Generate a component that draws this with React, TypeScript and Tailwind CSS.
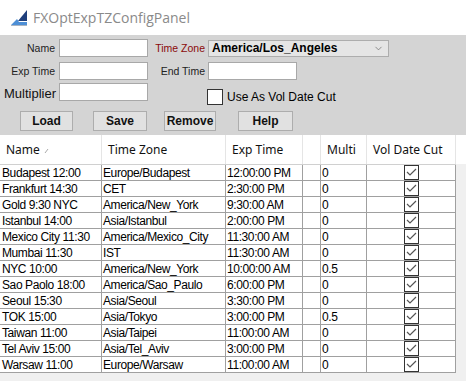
import { ChevronDown } from 'lucide-react';

const rows = [
  ['Budapest 12:00', 'Europe/Budapest', '12:00:00 PM', '0'],
  ['Frankfurt 14:30', 'CET', '2:30:00 PM', '0'],
  ['Gold 9:30 NYC', 'America/New_York', '9:30:00 AM', '0'],
  ['Istanbul 14:00', 'Asia/Istanbul', '2:00:00 PM', '0'],
  ['Mexico City 11:30', 'America/Mexico_City', '11:30:00 AM', '0'],
  ['Mumbai 11:30', 'IST', '11:30:00 AM', '0'],
  ['NYC 10:00', 'America/New_York', '10:00:00 AM', '0.5'],
  ['Sao Paolo 18:00', 'America/Sao_Paulo', '6:00:00 PM', '0'],
  ['Seoul 15:30', 'Asia/Seoul', '3:30:00 PM', '0'],
  ['TOK 15:00', 'Asia/Tokyo', '3:00:00 PM', '0.5'],
  ['Taiwan 11:00', 'Asia/Taipei', '11:00:00 AM', '0'],
  ['Tel Aviv 15:00', 'Asia/Tel_Aviv', '3:00:00 PM', '0'],
  ['Warsaw 11:00', 'Europe/Warsaw', '11:00:00 AM', '0'],
];

const AppIcon = () => (
  <svg width="18" height="16" viewBox="0 0 18 16">
    <polygon points="17,0 17,11 8,11" fill="#1f3f7c" />
    <polygon points="1,15 7,9 9,12 17,12 17,15" fill="#4d8fd6" />
    <polygon points="1,15 17,15 17,16 1,16" fill="#a9b4c2" />
  </svg>
);

const CellCheck = () => (
  <div className="w-[15px] h-[15px] border border-[#333] bg-white flex items-center justify-center">
    <svg width="11" height="9" viewBox="0 0 11 9">
      <polyline points="1,4 4,7 10,1" fill="none" stroke="#555" strokeWidth="1.2" />
    </svg>
  </div>
);

const label = "text-[10.5px] text-right pr-[2px] leading-none";
const input = "h-[18px] bg-white border border-[#a8a8a8]";
const btn = "h-[20px] bg-[#e1e1e1] border border-[#adadad] text-[12px] font-bold text-[#111] flex items-center justify-center";
const th = "h-[29px] border-r border-[#e5e5e5] pl-[6px] flex items-center text-[12px] text-[#111]";
const td = "h-[16px] border-r border-b border-[#a0a0a0] flex items-center text-[12px] tracking-[-0.4px] text-black whitespace-nowrap overflow-hidden";

export default function App() {
  return (
    <div className="w-[466px] h-[381px] bg-[#f0f0f0] overflow-hidden flex flex-col" style={{ fontFamily: '"Liberation Sans", Arial, sans-serif' }}>
      <div className="h-[35px] shrink-0 bg-white flex items-center pl-[10px] gap-[5px]">
        <AppIcon />
        <span className="text-[14px] text-[#8a8a8a]" style={{ fontFamily: '"Open Sans", sans-serif' }}>FXOptExpTZConfigPanel</span>
      </div>

      <div className="h-[100px] shrink-0 bg-[#d4d4d4] pt-[4px]">
        <div className="grid grid-cols-[57px_91px_59px_auto] items-center">
          <div className={label + ' text-[#222]'}>Name</div>
          <div className={input + ' ml-[2px] w-[89px]'} />
          <div className={label + ' text-[#8b0a0a]'}>Time Zone</div>
          <div className="ml-[1px] w-[181px] h-[17px] bg-[#e5e5e5] border border-[#adadad] flex items-center justify-between pl-[3px] pr-[4px]">
            <span className="text-[12px] font-bold text-black">America/Los_Angeles</span>
            <ChevronDown size={11} strokeWidth={1.5} color="#666" />
          </div>
        </div>
        <div className="grid grid-cols-[57px_91px_59px_auto] items-center mt-[5px]">
          <div className={label + ' text-[#222]'}>Exp Time</div>
          <div className={input + ' ml-[2px] w-[89px]'} />
          <div className={label + ' text-[#222]'}>End Time</div>
          <div className={input + ' ml-[1px] w-[89px]'} />
        </div>
        <div className="grid grid-cols-[57px_91px_59px_auto] items-start mt-[3px]">
          <div className="text-[13px] text-[#111] text-right pr-[1px] pt-[1px]">Multiplier</div>
          <div className={input + ' ml-[2px] w-[89px]'} />
          <div />
          <div className="flex items-center gap-[4px] mt-[5px]">
            <div className="w-[16px] h-[16px] bg-white border border-[#333]" />
            <span className="text-[12px] text-black">Use As Vol Date Cut</span>
          </div>
        </div>
        <div className="flex mt-[5px] pl-[20px]">
          <div className={btn + ' w-[53px]'}>Load</div>
          <div className={btn + ' w-[54px] ml-[20px]'}>Save</div>
          <div className={btn + ' w-[52px] ml-[17px]'}>Remove</div>
          <div className={btn + ' w-[55px] ml-[22px]'}>Help</div>
        </div>
      </div>

      <div className="bg-white flex" style={{ fontFamily: '"Noto Sans", sans-serif' }}>
        <div className="grid grid-cols-[102px_124px_77px_18px_46px_89px] w-[456px]">
          <div className={th}>
            Name
            <svg width="6" height="6" viewBox="0 0 6 6" className="ml-[4px] mt-[2px]">
              <line x1="1" y1="5" x2="4" y2="1" stroke="#aaa" strokeWidth="1" />
            </svg>
          </div>
          <div className={th}>Time Zone</div>
          <div className={th}>Exp Time</div>
          <div className={th} />
          <div className={th}>Multi</div>
          <div className={th + ' pl-[5px]'}>Vol Date Cut</div>
        </div>
      </div>

      <div className="grid grid-cols-[102px_124px_77px_18px_46px_89px] w-[456px] border-t border-[#d0d0d0] bg-white">
        {rows.map((r) => (
          <div key={r[0]} className="contents">
            <div className={td + ' pl-[2px]'}>{r[0]}</div>
            <div className={td + ' pl-[1px]'}>{r[1]}</div>
            <div className={td + ' pl-[1px]'}>{r[2]}</div>
            <div className={td} />
            <div className={td + ' pl-[1px]'}>{r[3]}</div>
            <div className={td + ' justify-center'}>
              <CellCheck />
            </div>
          </div>
        ))}
      </div>
    </div>
  );
}
